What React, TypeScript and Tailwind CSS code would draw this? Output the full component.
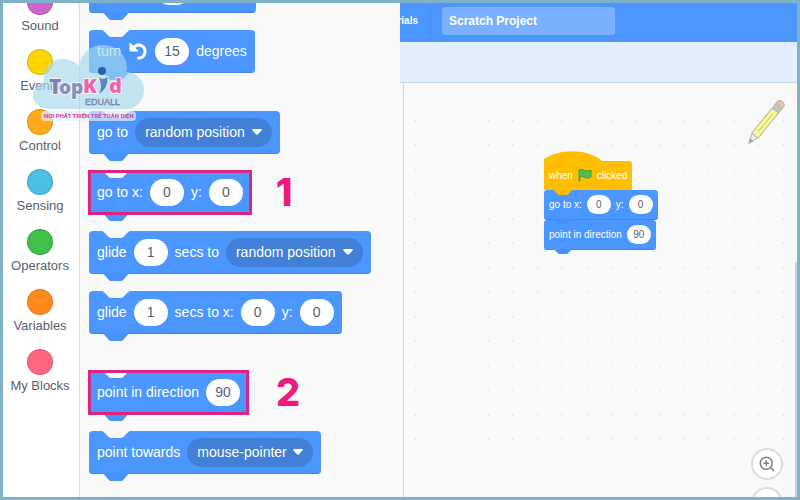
import React from 'react';
import { ZoomIn } from 'lucide-react';

const categories = [
  { name: 'Sound', color: 'bg-[#cf63cf]' },
  { name: 'Events', color: 'bg-[#ffd500]' },
  { name: 'Control', color: 'bg-[#ffab19]' },
  { name: 'Sensing', color: 'bg-[#4cbfe6]' },
  { name: 'Operators', color: 'bg-[#40bf4a]' },
  { name: 'Variables', color: 'bg-[#ff8c1a]' },
  { name: 'My Blocks', color: 'bg-[#ff6680]' },
];

// Trapezoid used both for the notch on top and the tab underneath
function Bump({ className }: { className: string }) {
  return (
    <svg viewBox="0 0 32 8" preserveAspectRatio="none" className={className} aria-hidden="true">
      <path d="M0 0 C2 0 3 .5 4 1.500 L8 6 C9 7.500 10 8 12 8 H20 C22 8 23 7.500 24 6 L28 1.500 C29 .5 30 0 32 0 Z" />
    </svg>
  );
}

interface BlockProps {
  children: React.ReactNode;
  marked?: boolean;
}

function Block({ children, marked }: BlockProps) {
  return (
    <div className="relative flex h-[43px] w-fit shrink-0 items-center gap-[7px] rounded-[4px] border-b border-[#3f84e6] bg-[#4c97ff] px-2 text-sm whitespace-nowrap text-white">
      <Bump className="absolute top-0 left-[11px] h-[7px] w-8 fill-[#f9f9f9]" />
      <Bump className="absolute top-[42px] left-[11px] h-2 w-8 fill-[#4793fa]" />
      {children}
      {marked && <div className="absolute -inset-x-px -top-px -bottom-0.5 border-3 border-[#dd2480]" />}
    </div>
  );
}

function NumberField({ value, label }: { value: string; label: string }) {
  return (
    <input
      aria-label={label}
      defaultValue={value}
      className="h-[27px] w-[34px] rounded-full bg-white text-center text-sm text-[#575e75] outline-none"
    />
  );
}

function Dropdown({ value, label, width }: { value: string; label: string; width: string }) {
  return (
    <div className="relative flex items-center">
      <select
        aria-label={label}
        className={`h-[29px] appearance-none rounded-full bg-[#4280d7] pl-[10px] text-sm text-white outline-none ${width}`}
      >
        <option>{value}</option>
      </select>
      <svg viewBox="0 0 10 6" className="pointer-events-none absolute right-[10px] h-[6px] w-[10px] fill-white" aria-hidden="true">
        <path d="M1 0 H9 Q10.500 .5 9.500 1.500 L6 5.300 Q5 6.200 4 5.300 L.5 1.500 Q-.5 .5 1 0 Z" />
      </svg>
    </div>
  );
}

function SmallField({ value, label }: { value: string; label: string }) {
  return (
    <input
      aria-label={label}
      defaultValue={value}
      className="h-[19px] w-6 rounded-full bg-white text-center text-[10px] text-[#575e75] outline-none"
    />
  );
}

function SmallBlock({ children }: { children: React.ReactNode }) {
  return (
    <div className="relative flex h-[30px] w-fit items-center gap-[5px] rounded-[3px] border-b border-[#3f84e6] bg-[#4c97ff] px-[5px]">
      {children}
      <Bump className="absolute top-[29px] left-2 z-10 h-[5px] w-[22px] fill-[#4590f7]" />
    </div>
  );
}

function Script() {
  return (
    <div className="absolute top-[68px] left-[140px] text-[10px] whitespace-nowrap text-white">
      <svg viewBox="0 0 62 12" className="block h-3 w-[62px] fill-[#ffbf00]" aria-hidden="true">
        <path d="M0 12 V8 C16 -2 42 -3 58 10 L62 12 Z" />
      </svg>
      <div className="relative -mt-0.5 flex h-[29px] w-fit items-center gap-[5px] rounded-tr-[3px] bg-[#ffbf00] px-[5px]">
        <span>when</span>
        <svg viewBox="0 0 14 13" className="h-[13px] w-[14px]" aria-hidden="true">
          <path d="M1 1 C5 -1 8 4 13 1 V8 C8 11 5 6 2 8 V12 H1 Z" fill="#4cbf56" stroke="#45993d" />
        </svg>
        <span>clicked</span>
        <Bump className="absolute top-[29px] left-2 z-10 h-[5px] w-[22px] fill-[#ffbf00]" />
      </div>
      <SmallBlock>
        <span>go to x:</span>
        <SmallField value="0" label="script x" />
        <span>y:</span>
        <SmallField value="0" label="script y" />
      </SmallBlock>
      <SmallBlock>
        <span>point in direction</span>
        <SmallField value="90" label="script direction" />
      </SmallBlock>
    </div>
  );
}

function Pencil() {
  return (
    <svg viewBox="0 0 40 46" className="absolute top-4 right-[11px] h-[46px] w-10" aria-hidden="true">
      <g transform="translate(3 44) rotate(-51)" stroke="#b3b3b3" strokeWidth="1">
        <path d="M0 0 L10 -4 V4 Z" fill="#f5f1ea" />
        <path d="M0 0 L4 -2 V2 Z" fill="#9a9a9a" />
        <path d="M10 -4 H42 V4 H10 Q8 3 10 1.500 Q8 0 10 -1.500 Q8 -3 10 -4 Z" fill="#fbfa8f" />
        <path d="M15 0 H38" fill="none" stroke="#c9c77a" />
        <path d="M42 -4 H48 V4 H42 Z" fill="#d4d4d4" />
        <path d="M44 -4 V4 M46 -4 V4" fill="none" />
        <path d="M48 -4 H50 Q53 -4 53 0 Q53 4 50 4 H48 Z" fill="#f5c3a0" />
      </g>
    </svg>
  );
}

function Watermark() {
  return (
    <svg viewBox="30 42 118 82" className="pointer-events-none absolute top-[39px] left-[27px] h-[82px] w-[118px]" role="img" aria-label="TopKid Eduall">
      <path
        d="M50 109 C40 109 33 103 33 95 C33 88 38 83 44 82 C42 69 50 59 62 59 C69 59 75 61 79 66 C81 53 91 45 103 45 C116 45 127 55 127 68 C127 70 127 71 126 72 C136 72 144 80 144 90 C144 101 136 109 126 109 Z"
        fill="#a5d8ec"
        fillOpacity=".65"
      />
      <rect x="41" y="111" width="95" height="10" rx="4" fill="#e4eefb" fillOpacity=".7" />
      <g fontFamily="Open Sans, sans-serif" fontWeight="800" stroke="#fff" strokeOpacity=".8" strokeWidth="2" strokeLinejoin="round" paintOrder="stroke">
        <text x="49" y="94" fontSize="21" fill="#7f7fb2">T</text>
        <text x="59" y="94" fontSize="19" fill="#8390bd">op</text>
        <text x="83" y="93" fontSize="20" fill="#f362ab">K</text>
        <text x="109" y="93" fontSize="20" fill="#f362ab">d</text>
      </g>
      <circle cx="102" cy="71" r="4" fill="#2f5fa8" />
      <path d="M98 76 Q103 81 108 76 Q109 89 98 95 Q103 87 98 76 Z" fill="#5688bd" stroke="#fff" strokeOpacity=".6" />
      <text x="85" y="105" fontSize="9" fill="#6f83ad" stroke="#6f83ad" strokeWidth=".3" fontFamily="Liberation Sans, sans-serif">EDUALL</text>
      <text x="44" y="118" fontSize="6" fontWeight="700" fill="#cf45a8" fontFamily="Roboto, sans-serif">NƠI PHÁT TRIỂN TRẺ TOÀN DIỆN</text>
    </svg>
  );
}

export default function App() {
  return (
    <div className="relative flex h-screen overflow-hidden border-3 border-[#7fb2c9] bg-[#f9f9f9] font-['Liberation_Sans',Arial,sans-serif]">
      {/* CATEGORIES */}
      <nav className="flex w-[77px] shrink-0 flex-col border-r border-[#dcdcdc] bg-white pr-0.5">
        <div className="-mt-[14px] flex flex-col">
          {categories.map((category) => (
            <button key={category.name} className="flex h-[60px] shrink-0 flex-col items-center text-[13px] leading-[22px] text-[#575e75]">
              <span className={`h-[26px] w-[26px] shrink-0 rounded-full border border-black/15 ${category.color}`} />
              {category.name}
            </button>
          ))}
        </div>
      </nav>

      {/* BLOCK PALETTE */}
      <main className="flex w-80 shrink-0 flex-col gap-[17px] overflow-hidden pl-[9px]">
        <div className="-mt-[33px]">
          <Block>
            <div className="flex w-[151px] justify-center">
              <NumberField value="15" label="turn right degrees" />
            </div>
          </Block>
        </div>
        <Block>
          <span>turn</span>
          <svg viewBox="0 0 20 20" className="h-5 w-5" aria-hidden="true">
            <path d="M6 6 C10 2 17 4 17 10.500 C17 15 14 17 10.500 17" fill="none" stroke="#fff" strokeWidth="3" strokeLinecap="round" />
            <path d="M2 2 V9 Q2 10 3 10 H10 Z" fill="#fff" stroke="#fff" strokeLinejoin="round" />
          </svg>
          <NumberField value="15" label="turn left degrees" />
          <span>degrees</span>
        </Block>
        <div className="mt-[21px]">
          <Block>
            <span>go to</span>
            <Dropdown value="random position" label="go to target" width="w-[137px]" />
          </Block>
        </div>
        <div className="flex items-center gap-[25px]">
          <Block marked>
            <span>go to x:</span>
            <NumberField value="0" label="go to x" />
            <span>y:</span>
            <NumberField value="0" label="go to y" />
          </Block>
          <strong className="font-['Inter',sans-serif] text-[38px] leading-[43px] font-extrabold text-[#ec1c7b]">1</strong>
        </div>
        <Block>
          <span>glide</span>
          <NumberField value="1" label="glide seconds to target" />
          <span>secs to</span>
          <Dropdown value="random position" label="glide target" width="w-[137px]" />
        </Block>
        <Block>
          <span>glide</span>
          <NumberField value="1" label="glide seconds" />
          <span>secs to x:</span>
          <NumberField value="0" label="glide to x" />
          <span>y:</span>
          <NumberField value="0" label="glide to y" />
        </Block>
        <div className="mt-5 flex items-center gap-7">
          <Block marked>
            <span>point in direction</span>
            <NumberField value="90" label="direction" />
          </Block>
          <strong className="font-['Inter',sans-serif] text-[38px] leading-[43px] font-extrabold text-[#ec1c7b]">2</strong>
        </div>
        <Block>
          <span>point towards</span>
          <Dropdown value="mouse-pointer" label="point towards" width="w-[126px]" />
        </Block>
      </main>

      {/* EDITOR */}
      <section className="flex min-w-0 flex-1 flex-col">
        <header className="flex h-[39px] shrink-0 items-center bg-[#4c97ff] pb-1 text-white">
          <div className="flex w-[18px] shrink-0 justify-end overflow-hidden text-[10px] font-bold">
            <a href="#tutorials">Tutorials</a>
          </div>
          <div className="ml-3 h-[34px] w-px bg-[#478ff3]" />
          <input
            aria-label="Project title"
            defaultValue="Scratch Project"
            className="ml-[11px] h-7 w-[173px] rounded-[3px] bg-[#79b1ff] px-[7px] text-xs font-bold outline-none"
          />
        </header>
        <div className="h-[41px] shrink-0 border-b border-[#c9d6e4] bg-[#e3efff]" />
        <div className="relative ml-[3px] flex-1 overflow-hidden border-l border-[#d4d4d4]">
          <svg className="block h-full w-full" aria-hidden="true">
            <defs>
              <pattern id="grid" width="49" height="49" patternUnits="userSpaceOnUse">
                <g fill="#ececec">
                  <rect x="10" y="12" width="2" height="2" />
                  <rect x="35" y="12" width="2" height="2" />
                  <rect x="10" y="37" width="2" height="2" />
                  <rect x="35" y="37" width="2" height="2" />
                </g>
              </pattern>
            </defs>
            <rect width="100%" height="100%" fill="url(#grid)" />
          </svg>
          <div className="absolute top-[179px] right-0 bottom-0 w-0.5 bg-[#c9d3de]" />
          <Script />
          <Pencil />
          <div className="absolute right-[14px] -bottom-[22px] flex flex-col gap-[7px]">
            <button aria-label="Zoom in" className="flex h-8 w-8 items-center justify-center rounded-full border-2 border-[#dcdcdc] bg-white">
              <ZoomIn className="h-[18px] w-[18px] text-[#7b7f92]" />
            </button>
            <button aria-label="Zoom out" className="h-8 w-8 rounded-full border-2 border-[#dcdcdc] bg-white" />
          </div>
        </div>
      </section>

      <Watermark />
    </div>
  );
}
